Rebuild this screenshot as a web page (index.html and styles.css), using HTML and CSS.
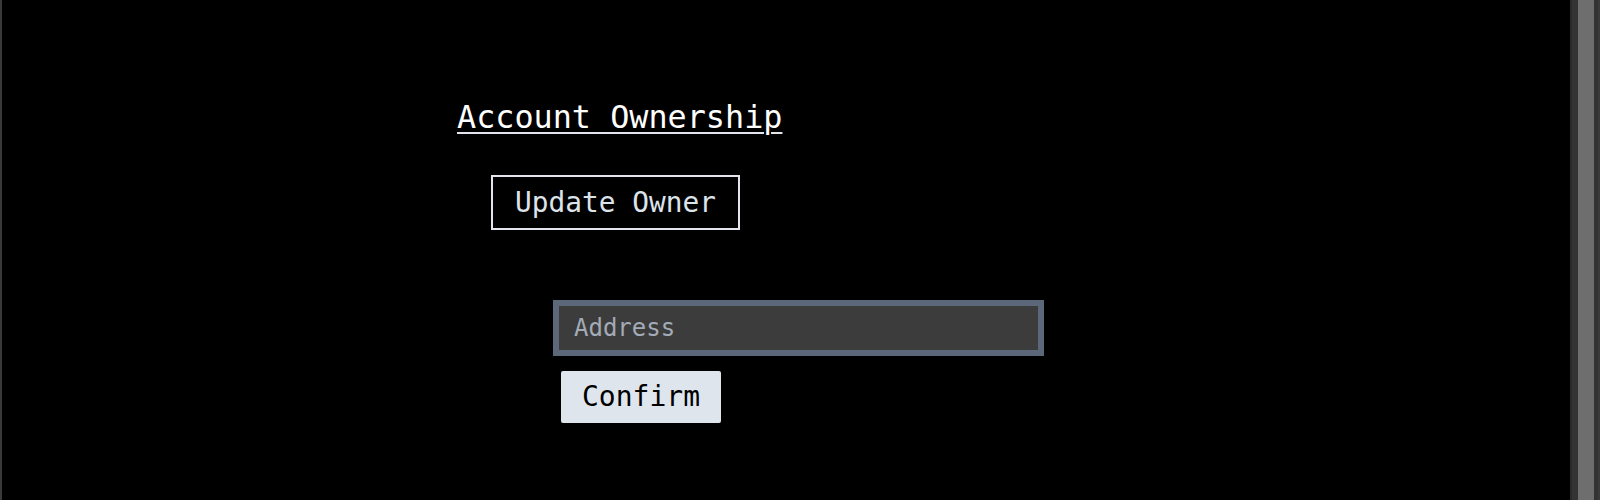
FILE: index.html
```html
<!DOCTYPE html>
<html lang="en">
<head>
<meta charset="utf-8">
<title>Account Ownership</title>
<link rel="stylesheet" href="styles.css">
</head>
<body>
<div class="frame">
  <main class="main">
    <section class="ownership">
      <h2 class="title">Account Ownership</h2>
      <div class="actions">
        <button class="outline-btn" type="button">Update Owner</button>
      </div>
      <form class="owner-form">
        <input class="address" type="text" placeholder="Address">
        <button class="confirm" type="button">Confirm</button>
      </form>
    </section>
  </main>
  <div class="scrollbar"><div class="thumb"></div></div>
</div>
</body>
</html>
```

FILE: styles.css
```css
* { box-sizing: border-box; }
html, body {
  margin: 0;
  padding: 0;
  background: #000;
  height: 100%;
  overflow: hidden;
}
body {
  font-family: "DejaVu Sans Mono", "Liberation Mono", monospace;
  color: #e5e7eb;
}
.frame {
  display: flex;
  height: 500px;
  border-left: 2px solid #3a3a3a;
  border-right: 2px solid #3a3a3a;
}
.main {
  flex: 1;
  min-width: 0;
}
.ownership {
  padding-top: 97px;
  padding-left: 455px;
  display: flex;
  flex-direction: column;
  align-items: flex-start;
}
.title {
  margin: 0;
  font-size: 31.8px;
  line-height: 40px;
  font-weight: 400;
  color: #ffffff;
  text-decoration: underline;
  text-decoration-thickness: 2px;
  text-underline-offset: 4px;
  text-decoration-color: #e2e6ec;
}
.actions {
  margin-top: 38px;
  margin-left: 34px;
}
.outline-btn {
  font-family: inherit;
  font-size: 27.8px;
  line-height: 51px;
  height: 55px;
  width: 249px;
  padding: 0;
  background: #000;
  color: #dde3ea;
  border: 2px solid #e2e6ec;
  border-radius: 0;
  text-align: center;
}
.owner-form {
  margin-top: 70px;
  margin-left: 96px;
  display: flex;
  flex-direction: column;
  align-items: flex-start;
}
.address {
  width: 491px;
  height: 56px;
  border: 6px solid #5d677a;
  background: #3c3c3c;
  padding: 0 0 0 15px;
  font-family: inherit;
  font-size: 24px;
  color: #e5e7eb;
  outline: none;
}
.address::placeholder {
  color: #a3abb7;
}
.confirm {
  margin-top: 15px;
  margin-left: 8px;
  width: 160px;
  height: 52px;
  padding: 0;
  border: none;
  border-radius: 2px;
  background: #dfe5ec;
  color: #000;
  font-family: inherit;
  font-size: 28px;
  line-height: 52px;
  text-align: center;
}
.scrollbar {
  width: 28px;
  flex: none;
  background: #333333;
  border-left: 2px solid #2a2a2a;
  padding: 0 4px 0 6px;
}
.thumb {
  height: 100%;
  background: #6e6e6e;
}
```
